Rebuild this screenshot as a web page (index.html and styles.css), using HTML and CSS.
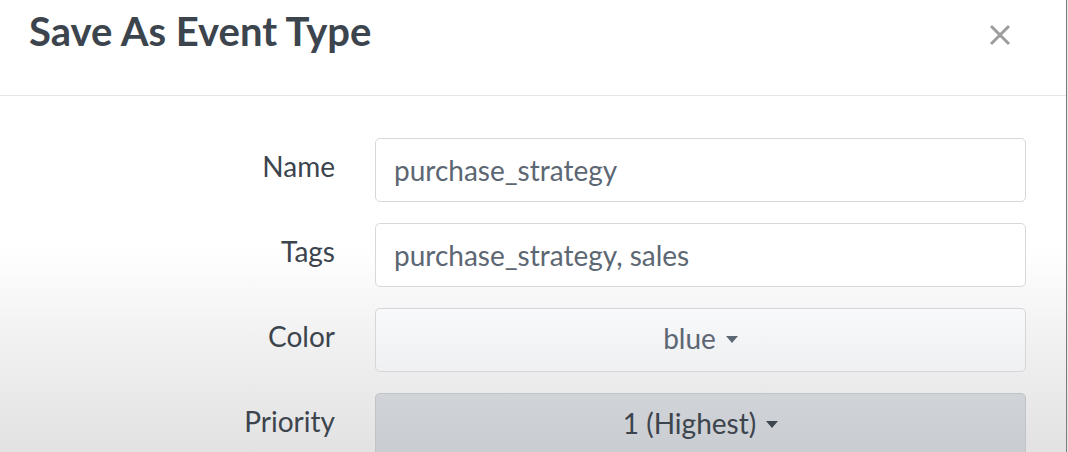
FILE: index.html
```html
<!DOCTYPE html>
<html>
<head>
<meta charset="utf-8">
<link rel="stylesheet" href="styles.css">
</head>
<body>
<div class="modal">
  <header class="modal-header">
    <h1 class="title">Save As Event Type</h1>
    <button class="close" aria-label="Close">
      <svg width="22" height="22" viewBox="0 0 22 22"><path d="M2 2 L20 20 M20 2 L2 20" stroke="#9d9d9d" stroke-width="3" stroke-linecap="butt"/></svg>
    </button>
  </header>
  <div class="modal-body">
    <div class="row">
      <label class="label">Name</label>
      <div class="field input">purchase_strategy</div>
    </div>
    <div class="row">
      <label class="label">Tags</label>
      <div class="field input">purchase_strategy, sales</div>
    </div>
    <div class="row">
      <label class="label">Color</label>
      <div class="field select">blue <span class="caret"></span></div>
    </div>
    <div class="row">
      <label class="label">Priority</label>
      <div class="field select active">1 (Highest) <span class="caret"></span></div>
    </div>
  </div>
</div>
</body>
</html>
```
FILE: styles.css
```css
html, body {
  margin: 0;
  padding: 0;
  width: 1068px;
  height: 452px;
  overflow: hidden;
  background: #e6e6e6;
  font-family: Lato, "Open Sans", sans-serif;
}
.modal {
  width: 1067px;
  height: 452px;
  border-right: 1px solid #7c7c7c;
  box-sizing: border-box;
  background: linear-gradient(to bottom, #ffffff 0%, #ffffff 55%, #f1f1f1 75%, #e2e2e2 100%);
}
.modal-header {
  height: 95px;
  border-bottom: 1px solid #e6e6e6;
  display: flex;
  align-items: center;
  justify-content: space-between;
  padding: 0 55px 0 29px;
  background: #fff;
}
.title {
  margin: 0 0 34px 0;
  font-size: 40px;
  font-weight: 700;
  color: #3c444d;
}
.close {
  border: 0;
  background: none;
  padding: 0;
  margin: 0 0 26px 0;
  display: flex;
}
.modal-body {
  padding: 42px 40px 0 0;
  display: flex;
  flex-direction: column;
  gap: 21px;
}
.row {
  display: flex;
  align-items: center;
  gap: 40px;
}
.label {
  width: 335px;
  text-align: right;
  font-size: 28px;
  color: #3c444d;
  padding-bottom: 8px;
}
.field {
  flex: 1;
  height: 64px;
  box-sizing: border-box;
  border: 1px solid #d8d8d8;
  border-radius: 5px;
  font-size: 28px;
  display: flex;
  align-items: center;
}
.input {
  background: #fff;
  padding-left: 18px;
  color: #5c6773;
}
.select {
  justify-content: center;
  gap: 10px;
  color: #5c6773;
  background: linear-gradient(to bottom, #f8f9fa, #eef0f2);
  border-color: #d4d6d9;
  padding-bottom: 4px;
}
.select.active {
  background: linear-gradient(to bottom, #d0d3d7, #c9ccd0);
  border-color: #c0c3c7;
  color: #3c444d;
}
.caret {
  width: 0;
  height: 0;
  border-left: 6px solid transparent;
  border-right: 6px solid transparent;
  border-top: 7px solid currentColor;
  margin-top: 2px;
}
```
